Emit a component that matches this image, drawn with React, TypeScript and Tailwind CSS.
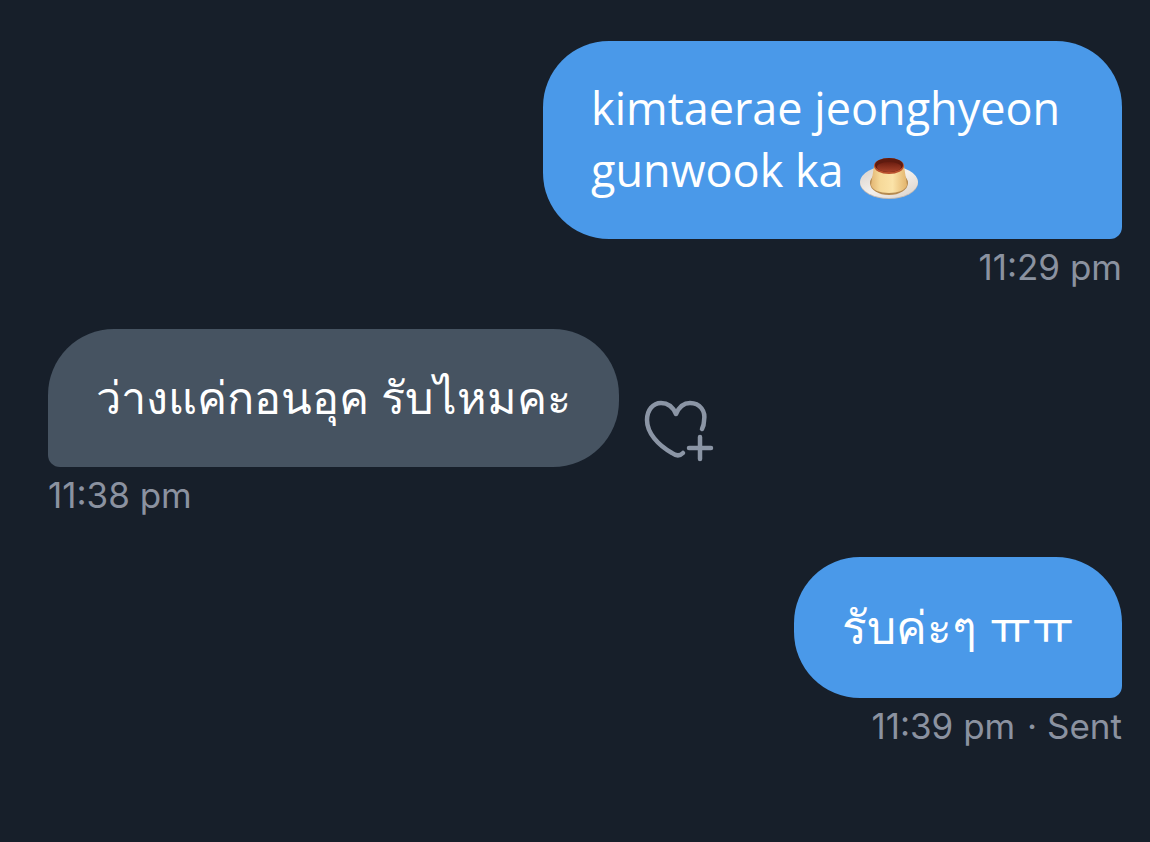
import React from 'react';

type Message = {
  id: number;
  text: string;
  textStyle: string;
  time: string;
  status?: string;
  mine: boolean;
  pudding?: boolean;
};

const messages: Message[] = [
  {
    id: 1,
    text: 'kimtaerae jeonghyeon gunwook ka',
    textStyle: 'text-[45px] leading-[62px]',
    time: '11:29 pm',
    mine: true,
    pudding: true,
  },
  {
    id: 2,
    text: 'ว่างแค่กอนอุค รับไหมคะ',
    textStyle: 'text-[45px] leading-[64px]',
    time: '11:38 pm',
    mine: false,
  },
  {
    id: 3,
    text: 'รับค่ะๆ ㅠㅠ',
    textStyle: 'text-[46px] leading-[67px]',
    time: '11:39 pm',
    status: 'Sent',
    mine: true,
  },
];

function Pudding() {
  return (
    <svg
      viewBox="0 -4 60 48"
      role="img"
      aria-label="custard"
      className="-my-2 ml-1 inline-block h-12 w-[60px] align-middle"
    >
      <defs>
        <linearGradient id="plate" x1="0" y1="0" x2="1" y2="1">
          <stop offset="0" stopColor="#d6cec8" />
          <stop offset="0.5" stopColor="#f4f0ec" />
          <stop offset="1" stopColor="#d9d0c8" />
        </linearGradient>
        <linearGradient id="custard" x1="0" x2="1">
          <stop offset="0" stopColor="#e3b673" />
          <stop offset="0.25" stopColor="#f6d999" />
          <stop offset="0.6" stopColor="#fbe3a8" />
          <stop offset="1" stopColor="#e3b46c" />
        </linearGradient>
        <linearGradient id="caramel" x1="0" y1="0" x2="0" y2="1">
          <stop offset="0" stopColor="#6b1d10" />
          <stop offset="1" stopColor="#a8432a" />
        </linearGradient>
      </defs>
      <ellipse cx="30" cy="28" rx="29" ry="16" fill="#c5bbb4" />
      <ellipse cx="30" cy="27" rx="29" ry="16" fill="url(#plate)" />
      <ellipse cx="30" cy="28" rx="19" ry="12" fill="#b58a50" />
      <path
        d="M15 11 C14 18 13 23 12 30 C13 35 21 38 30 38 S47 35 48 30 C47 23 46 18 45 11Z"
        fill="url(#custard)"
      />
      <ellipse cx="30" cy="11" rx="15" ry="8" fill="#b9502d" />
      <ellipse cx="30" cy="10" rx="14" ry="7" fill="#5f1b0f" />
      <ellipse cx="30" cy="12" rx="12" ry="5" fill="url(#caramel)" />
    </svg>
  );
}

function HeartPlus() {
  return (
    <svg
      viewBox="0 0 72 64"
      fill="none"
      stroke="currentColor"
      strokeWidth="4.500"
      strokeLinecap="round"
      strokeLinejoin="round"
      className="h-16 w-[72px]"
      aria-hidden="true"
    >
      <path d="M40 54 C37 57 33 57 29 54 C15 46 4 34 4 21 C4 11 10 4 18 4 C25 4 30 8 33 15 C36 8 41 4 47 4 C57 4 63 12 61 22 C61 25 60 28 59 30" />
      <path d="M57 38 V60 M46 49 H68" />
    </svg>
  );
}

function MessageItem({ message }: { message: Message }) {
  const { mine } = message;

  return (
    <li className={`flex flex-col ${mine ? 'items-end' : 'items-start'}`}>
      <div className="flex items-end gap-6">
        <div
          className={`max-w-[579px] px-12 pt-9 pb-[38px] text-white ${message.textStyle} ${
            mine
              ? 'rounded-[66px] rounded-br-xl bg-[#4a99e9]'
              : 'rounded-[66px] rounded-bl-xl bg-[#465361]'
          }`}
        >
          <p>
            {message.text}
            {message.pudding && (
              <>
                {' '}
                <Pudding />
              </>
            )}
          </p>
        </div>
        {!mine && (
          <button type="button" aria-label="Add reaction" className="pb-1 text-[#8b95a5]">
            <HeartPlus />
          </button>
        )}
      </div>
      <p className="mt-1 font-['Inter',sans-serif] text-[35px] leading-[48px] text-[#8b92a0]">
        <time>{message.time}</time>
        {message.status && <span className="ml-0.5"> · {message.status}</span>}
      </p>
    </li>
  );
}

export default function App() {
  return (
    <main className="min-h-screen bg-[#171f2a] pt-[41px] pr-7 pb-12 pl-12 font-['Open_Sans','Noto_Sans','Noto_Sans_CJK_KR',sans-serif]">
      <ul className="flex flex-col gap-[38px]">
        {messages.map((message) => (
          <MessageItem key={message.id} message={message} />
        ))}
      </ul>
    </main>
  );
}
